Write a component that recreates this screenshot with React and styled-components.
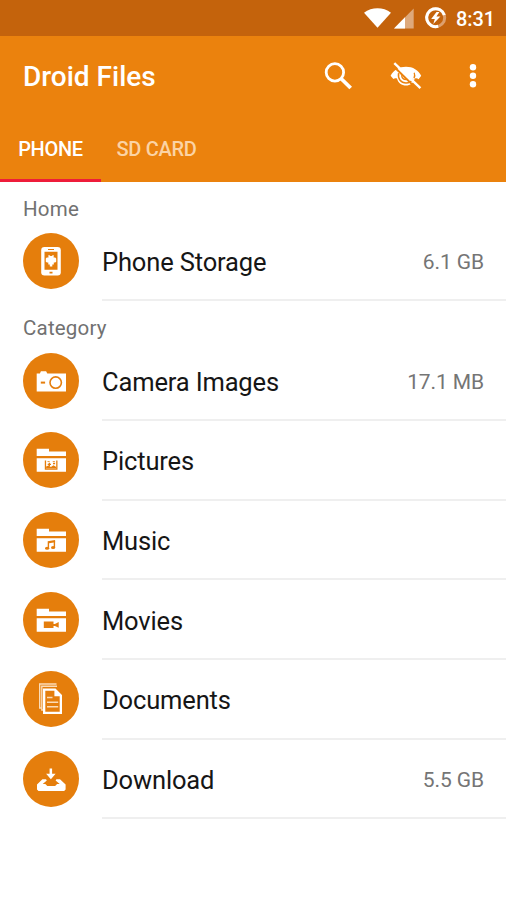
import React, { useState } from 'react';
import styled, { createGlobalStyle } from 'styled-components';

const GlobalStyle = createGlobalStyle`
  * {
    box-sizing: border-box;
  }
  body {
    margin: 0;
    background: #fff;
    font-family: Roboto, sans-serif;
  }
`;

const Screen = styled.div`
  width: 506px;
  height: 900px;
  overflow: hidden;
  background: white;
`;

const StatusBar = styled.div`
  height: 36px;
  padding-right: 11px;
  display: flex;
  align-items: center;
  justify-content: flex-end;
  background: #c4630c;
  color: white;
`;

const Clock = styled.span`
  margin-left: 8px;
  font-size: 20px;
  font-weight: 500;
  letter-spacing: -0.1px;
  line-height: 36px;
  padding-top: 2px;
`;

const Header = styled.header`
  height: 146px;
  background: #eb820d;
`;

const Toolbar = styled.div`
  height: 80px;
  padding-left: 23px;
  display: flex;
  align-items: center;
  color: white;
`;

const Title = styled.h1`
  margin: 0;
  padding-top: 1px;
  flex-grow: 1;
  font-size: 28px;
  font-weight: 500;
`;

const IconButton = styled.button`
  width: ${props => props.$width}px;
  height: 42px;
  padding: 0 0 1px;
  border: none;
  background: none;
  color: inherit;
  display: flex;
  align-items: center;
  justify-content: center;
`;

const Tabs = styled.nav`
  height: 66px;
  display: flex;
`;

const Tab = styled.button`
  height: 66px;
  width: ${props => props.$width}px;
  padding: 2px 0 0;
  border: none;
  border-bottom: 3px solid ${props => (props.$active ? '#ee1c3a' : 'transparent')};
  background: none;
  color: ${props => (props.$active ? '#fff' : '#fbd3a4')};
  font-family: inherit;
  font-size: 20px;
  font-weight: 500;
  letter-spacing: -0.3px;
  white-space: nowrap;
`;

const SectionTitle = styled.h2`
  margin: 0;
  height: 39.8px;
  padding: 7px 0 0 23px;
  color: #717171;
  font-size: 20.5px;
  font-weight: 400;
  line-height: 40px;
  letter-spacing: 0.2px;
`;

const Row = styled.div`
  height: 79.7px;
  padding-left: 23px;
  display: flex;
  align-items: center;
`;

const Badge = styled.div`
  flex: none;
  width: 56px;
  height: 56px;
  margin: 0 23px 1.2px 0;
  border-radius: 50%;
  background: #e57e0c;
`;

const RowBody = styled.div`
  flex-grow: 1;
  height: 100%;
  padding: 3px 22px 0 0;
  display: flex;
  align-items: center;
  justify-content: space-between;
  border-bottom: 2px solid #efefef;
`;

const Name = styled.span`
  color: #161616;
  font-size: 25.5px;
  letter-spacing: -0.15px;
`;

const Size = styled.span`
  color: #757575;
  font-size: 21px;
  letter-spacing: -0.1px;
`;

const Folder = ({ children }) => (
  <>
    <path fill="#fff" d="M13.7 16.8H26V19.6H43V24H13.7zM13.7 26.2H43V39.8H13.7z" />
    {children}
  </>
);

const drawings = {
  phone: (
    <>
      <rect x="18.2" y="14" width="19.6" height="28.5" rx="3.2" fill="#fff" />
      <path fill="#e57e0c" d="M21.5 18.8h13v18h-13zM25 16h6v.9h-6zM26.5 38.8h3v1.6h-3z" />
      <path
        fill="#fff"
        d="M25.3 22.2h1.3l.8.9h1.4l.8-.9h1.2l-.2 2.2h1.6l1 1.2v3.2l-1.1.8h-1.3v1.8h-1.5v2h-2.5v-2h-1.5v-1.8H24l-1.2-.8v-3.2l1-1.2h1.7z"
      />
    </>
  ),
  camera: (
    <>
      <path fill="#fff" d="M13.7 20.5h3.2l1-2.3h5.2l1.2 2.3H43v18.1H13.7z" />
      <circle cx="32.7" cy="29.6" r="5.7" fill="none" stroke="#e57e0c" strokeWidth="1.6" />
      <path fill="#e57e0c" d="M17.8 28.6h4.3v2h-4.3z" />
    </>
  ),
  pictures: (
    <Folder>
      <path
        fill="#e57e0c"
        fillRule="evenodd"
        d="M21.8 28.6h1.3v8h10.1v-8h1.3v9.1H21.8zM24.5 28.9h2.2v.9h-2.2zM29.7 28.9h2.2v.9h-2.2z"
      />
      <path fill="#e57e0c" d="M23.1 36.6v-2l2.4-1.1 2.4 1.6 2.6-1.8 2.7 1.8v1.5zM24.7 31.8h3.3v1.3h-3.3zM25.7 30.8h1.3v3.3h-1.3zM30 30.7h2.1v1.6H30z" />
    </Folder>
  ),
  music: (
    <Folder>
      <path fill="#e57e0c" d="M24.7 29.2l7.4-1.2v2.2l-6 1v5.3h-1.4z" />
      <path fill="#e57e0c" d="M30.7 29h1.4v6.6h-1.4z" />
      <ellipse cx="24.1" cy="36.3" rx="2.1" ry="1.5" fill="#e57e0c" />
      <ellipse cx="30.1" cy="35.4" rx="2.1" ry="1.5" fill="#e57e0c" />
    </Folder>
  ),
  movies: (
    <Folder>
      <path fill="#e57e0c" d="M20.8 29.6h9.7v2.4h1.4l3.8-1.9v5.7l-3.8-1.9h-1.4V36h-9.7z" />
    </Folder>
  ),
  documents: (
    <>
      <path fill="none" stroke="#fbdcb8" strokeWidth="1.4" d="M18.5 37h-1.8V13H33.5M20 39h-1.2V15.2H34" />
      <path fill="#fff" fillRule="evenodd" d="M20 17.5h12.5L39 24v19H20zM22.3 19.8v20.9h14.4V25.2h-5.3v-5.4z" />
      <path fill="#fbdcb8" d="M24 25.8h5.5v1.5H24zM24 30.4h11.2v1.5H24zM24 35h11.2v1.5H24z" />
    </>
  ),
  download: (
    <>
      <path fill="#fff" d="M26.6 17.6h2.5v5.2h3.5l-4.7 5.5-4.8-5.5h3.5z" />
      <path
        fill="#fff"
        d="M19.4 28.2h3.6l.8 1.3-4.1 3.4h2.6l2 2h7.8l2-2h2.6l-4.1-3.4.8-1.3H37l5.6 5.2v5l-1.5 1.6H15.5L14 38.4v-5z"
      />
    </>
  )
};

const SearchIcon = () => (
  <svg width="32" height="32" viewBox="0 0 32 32" fill="none" stroke="#fff">
    <circle cx="12.9" cy="12.4" r="8.7" strokeWidth="2.8" />
    <path d="M19 18.5L28.7 28" strokeWidth="3.8" />
  </svg>
);

const HiddenIcon = () => (
  <svg width="32" height="32" viewBox="0 0 32 32">
    <path fill="#fff" d="M.6 15.8C3.5 10.2 9 6.8 16 6.8s12.4 3.4 15.2 9L28.6 19.2c-1.2-1-2.4-1.2-3.8-.6-1.4 4.4-4.6 7-8.8 7s-8-2.6-9-7c-1.3-.6-2.5-.5-3.6.4z" />
    <path fill="none" stroke="#eb820d" strokeWidth="1.5" d="M8.6 13.2C7.6 19 11 23 16 23c3.4 0 5.6-1.5 6.7-4" />
    <path fill="none" stroke="#eb820d" strokeWidth="1.3" d="M11.8 14.3c-.5 3.4 1.4 5.3 4.7 5.2M24.2 12.7c.8 1.9.7 3.7-.2 5.5" />
    <path stroke="#eb820d" strokeWidth="2" d="M3 5.8L28.5 30.6" />
    <path stroke="#fff" strokeWidth="2.4" d="M4.3 3.2L30.4 28.2" />
  </svg>
);

const MoreIcon = () => (
  <svg width="8" height="26" viewBox="0 0 8 26" fill="#fff">
    <circle cx="4" cy="4.2" r="3.2" />
    <circle cx="4" cy="12.7" r="3.2" />
    <circle cx="4" cy="21.2" r="3.2" />
  </svg>
);

const StatusIcons = () => (
  <svg width="84" height="24" viewBox="0 0 84 24">
    <path fill="#fff" d="M0 6.7C7.8.9 19.2.9 27 6.7L13.5 21.8z" />
    <path fill="#dea97b" d="M49.7 2.5v20H30z" />
    <path fill="#fff" d="M41 11.3v11.2H30z" />
    <circle cx="71.7" cy="11.7" r="9" fill="none" stroke="#dda06e" strokeWidth="3" />
    <path
      fill="none"
      stroke="#fff"
      strokeWidth="3"
      d="M80.3 9.1A9 9 0 1 0 74.2 20.3"
    />
    <path fill="#fff" d="M72.5 5.9l-5.3 7h3.6l-1.5 5.2 7.1-7.7h-4l3-4.5z" />
  </svg>
);

const sections = [
  { title: 'Home', items: [{ icon: 'phone', name: 'Phone Storage', size: '6.1 GB' }] },
  {
    title: 'Category',
    items: [
      { icon: 'camera', name: 'Camera Images', size: '17.1 MB' },
      { icon: 'pictures', name: 'Pictures' },
      { icon: 'music', name: 'Music' },
      { icon: 'movies', name: 'Movies' },
      { icon: 'documents', name: 'Documents' },
      { icon: 'download', name: 'Download', size: '5.5 GB' }
    ]
  }
];

const tabs = [
  { label: 'PHONE', width: 101 },
  { label: 'SD CARD', width: 111 }
];

export default function App() {
  const [activeTab, setActiveTab] = useState('PHONE');

  return (
    <Screen>
      <GlobalStyle />
      <StatusBar>
        <StatusIcons />
        <Clock>8:31</Clock>
      </StatusBar>
      <Header>
        <Toolbar>
          <Title>Droid Files</Title>
          <IconButton $width={68} aria-label="Search"><SearchIcon /></IconButton>
          <IconButton $width={68} aria-label="Hidden files"><HiddenIcon /></IconButton>
          <IconButton $width={66} aria-label="More"><MoreIcon /></IconButton>
        </Toolbar>
        <Tabs>
          {tabs.map(tab => (
            <Tab
              key={tab.label}
              $width={tab.width}
              $active={tab.label === activeTab}
              onClick={() => setActiveTab(tab.label)}
            >
              {tab.label}
            </Tab>
          ))}
        </Tabs>
      </Header>
      {sections.map(section => (
        <section key={section.title}>
          <SectionTitle>{section.title}</SectionTitle>
          {section.items.map(item => (
            <Row key={item.name}>
              <Badge>
                <svg width="56" height="56" viewBox="0 0 56 56">{drawings[item.icon]}</svg>
              </Badge>
              <RowBody>
                <Name>{item.name}</Name>
                {item.size && <Size>{item.size}</Size>}
              </RowBody>
            </Row>
          ))}
        </section>
      ))}
    </Screen>
  );
}
